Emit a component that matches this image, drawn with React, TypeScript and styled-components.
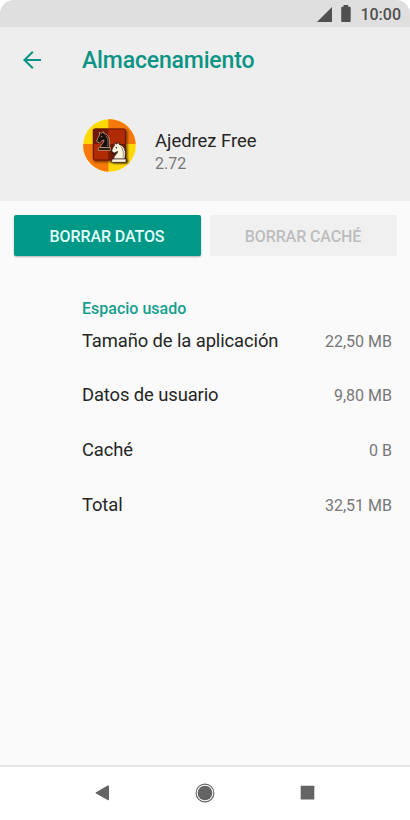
import React from 'react';
import styled, { createGlobalStyle } from 'styled-components';

interface UsageItem {
  label: string;
  value: string;
}

const usage: UsageItem[] = [
  { label: 'Tamaño de la aplicación', value: '22,50 MB' },
  { label: 'Datos de usuario', value: '9,80 MB' },
  { label: 'Caché', value: '0 B' },
  { label: 'Total', value: '32,51 MB' },
];

const ChessIcon: React.FC = () => (
  <svg width="53" height="53" viewBox="22 22 159 159">
    <defs>
      <clipPath id="disc">
        <circle cx="101.5" cy="101.5" r="79" />
      </clipPath>
      <filter id="soft" x="-20%" y="-20%" width="140%" height="140%">
        <feGaussianBlur stdDeviation="2.5" />
      </filter>
    </defs>
    <g clipPath="url(#disc)">
      <rect x="22" y="22" width="159" height="159" fill="#ffd906" />
      <rect x="98" y="22" width="83" height="75" fill="#f57a0b" />
      <rect x="22" y="97" width="76" height="84" fill="#f57a0b" />
    </g>
    <rect x="54" y="54" width="102" height="98" rx="6" fill="#5a2000" opacity="0.75" filter="url(#soft)" />
    <rect x="52" y="51" width="98" height="95" rx="5" fill="#b02b03" />
    <path d="M57 51H98V97H52V56Q52 51 57 51Z" fill="#741a04" />
    <path d="M98 97H150V141Q150 146 145 146H98Z" fill="#741a04" />
    <rect x="53" y="52" width="96" height="93" rx="5" fill="none" stroke="#611603" strokeWidth="3" />
    <g stroke="#e0b997" strokeWidth="2" strokeLinejoin="round" fill="#17100d">
      <path d="M74 108C74 99 86 94 85 85L78 88L71 94L63 89L66 80L72 70L71 62L78 65L83 60L85 66C99 67 104 84 101 108Z" />
      <path d="M69 108H104V116H67Z" />
      <path d="M90 72C98 80 98 92 96 104" fill="none" strokeWidth="1.5" />
      <circle cx="78" cy="75" r="1" />
    </g>
    <path
      d="M115 147C116 132 126 131 127 123L116 128L109 122L112 110L119 102L118 95L125 98L130 94L133 101C148 104 153 119 148 140L156 147V155H111V147Z"
      fill="#170b06"
      filter="url(#soft)"
    />
    <g stroke="#37241b" strokeWidth="2" strokeLinejoin="round" fill="#fff4dd">
      <path d="M114 142C115 130 126 127 126 119L116 124L108 119L111 109L117 101L116 94L123 97L129 93L131 99C147 102 152 118 147 142Z" />
      <path d="M110 142H151V152H107Z" />
      <path d="M136 105C144 114 144 125 142 138" fill="none" strokeWidth="1.5" />
      <circle cx="122" cy="108" r="1.5" fill="#37241b" />
    </g>
  </svg>
);

const App: React.FC = () => {
  return (
    <>
      <GlobalStyle />
      <Screen>
        <StatusBar>
          <SignalIcon width="16" height="16" viewBox="0 0 16 16">
            <path d="M0 15L15 0V15Z" />
          </SignalIcon>
          <BatteryIcon width="10" height="17" viewBox="0 0 10 17">
            <path d="M2.5 0H7.2V1.7H8.7Q9.7 1.7 9.7 2.7V16Q9.7 17 8.7 17H1.2Q.2 17 .2 16V2.7Q.2 1.7 1.2 1.7H2.5Z" />
          </BatteryIcon>
          <Clock>10:00</Clock>
        </StatusBar>

        <Header>
          <TitleBar>
            <BackButton aria-label="Atrás">
              <svg width="18" height="18" viewBox="0 0 18 18">
                <path d="M9.8 .8L1.5 9L9.8 17.2M1.5 9H18" />
              </svg>
            </BackButton>
            <Title>Almacenamiento</Title>
          </TitleBar>
          <AppInfo>
            <ChessIcon />
            <AppText>
              <AppName>Ajedrez Free</AppName>
              <AppVersion>2.72</AppVersion>
            </AppText>
          </AppInfo>
        </Header>

        <Content>
          <Actions>
            <ActionButton>BORRAR DATOS</ActionButton>
            <ActionButton disabled>BORRAR CACHÉ</ActionButton>
          </Actions>
          <SectionTitle>Espacio usado</SectionTitle>
          <UsageList>
            {usage.map((item) => (
              <UsageRow key={item.label}>
                <UsageLabel>{item.label}</UsageLabel>
                <UsageValue>{item.value}</UsageValue>
              </UsageRow>
            ))}
          </UsageList>
        </Content>

        <NavBar>
          <svg width="15" height="16" viewBox="0 0 15 16">
            <path d="M1 7.3L12.7 .6Q14 0 14 1.3V14.3Q14 15.7 12.7 15L1 8.5Q0 7.9 1 7.3Z" />
          </svg>
          <svg width="20" height="20" viewBox="0 0 20 20">
            <circle cx="10" cy="10" r="8.9" fill="none" stroke="#646464" strokeWidth="1.1" />
            <circle cx="10" cy="10" r="7.3" />
          </svg>
          <svg width="15" height="15" viewBox="0 0 15 15">
            <rect x="0.7" y="0.7" width="13.6" height="13.8" rx="0.5" />
          </svg>
        </NavBar>
      </Screen>
    </>
  );
};

export default App;

const GlobalStyle = createGlobalStyle`
  * {
    box-sizing: border-box;
  }

  body {
    margin: 0;
    background: #fff;
    font-family: Roboto, "Liberation Sans", sans-serif;
  }
`;

const Screen = styled.div`
  display: flex;
  flex-direction: column;
  width: 410px;
  height: 820px;
  overflow: hidden;
  border-radius: 14px 14px 0 0;
  background: #fafafa;
`;

const StatusBar = styled.div`
  display: flex;
  flex: none;
  justify-content: flex-end;
  align-items: flex-start;
  height: 27px;
  padding: 5px 9px 0 0;
  background: #dfdfdf;
  color: #505050;
  fill: #505050;
`;

const SignalIcon = styled.svg`
  margin: 2px 8px 0 0;
`;

const BatteryIcon = styled.svg`
  margin-right: 9px;
`;

const Clock = styled.span`
  font-size: 16px;
  font-weight: 500;
  line-height: 19px;
`;

const Header = styled.header`
  flex: none;
  height: 174px;
  background: #eee;
`;

const TitleBar = styled.div`
  display: flex;
  align-items: center;
  height: 66px;
  padding-left: 23px;
`;

const BackButton = styled.button`
  display: flex;
  width: 18px;
  margin: 0 41px 1px 0;
  padding: 0;
  border: 0;
  background: none;

  path {
    fill: none;
    stroke: #0b9485;
    stroke-width: 2.1;
  }
`;

const Title = styled.h1`
  margin: 0;
  color: #0b9485;
  font-size: 23px;
  font-weight: 500;
  letter-spacing: -0.16px;
`;

const AppInfo = styled.div`
  display: flex;
  padding: 26px 0 0 83px;
`;

const AppText = styled.div`
  padding: 10px 0 0 19px;
`;

const AppName = styled.div`
  color: #252525;
  font-size: 18.4px;
  line-height: 24px;
`;

const AppVersion = styled.div`
  color: #777;
  font-size: 16px;
  line-height: 21px;
`;

const Content = styled.main`
  flex: 1;
`;

const Actions = styled.div`
  display: flex;
  gap: 9px;
  padding: 14px 13.5px 0;
`;

const ActionButton = styled.button`
  flex: 1;
  height: 41px;
  padding: 1px 0 0;
  border: 0;
  border-radius: 2px;
  background: #009887;
  box-shadow: 0 1px 2px rgba(0, 0, 0, 0.3);
  color: #e2fffa;
  font: 500 16px Roboto, "Liberation Sans", sans-serif;
  letter-spacing: -0.1px;

  &:disabled {
    background: #f0f0f0;
    box-shadow: none;
    color: #bdbdbd;
  }
`;

const SectionTitle = styled.h2`
  margin: 43px 0 0 82px;
  color: #159e8e;
  font-size: 16px;
  font-weight: 500;
  line-height: 20px;
`;

const UsageList = styled.div`
  padding: 10px 18px 0 82px;
`;

const UsageRow = styled.div`
  display: flex;
  justify-content: space-between;
  align-items: baseline;
  height: 54.7px;

  &:first-child {
    height: 54.4px;
  }
`;

const UsageLabel = styled.span`
  color: #252525;
  font-size: 18.4px;
  letter-spacing: -0.1px;
  line-height: 24px;
`;

const UsageValue = styled.span`
  color: #777;
  font-size: 16px;
`;

const NavBar = styled.nav`
  display: flex;
  flex: none;
  justify-content: space-between;
  align-items: center;
  height: 55px;
  padding: 0 95px 2px;
  border-top: 2px solid #e6e6e6;
  background: #fff;
  fill: #646464;
`;
